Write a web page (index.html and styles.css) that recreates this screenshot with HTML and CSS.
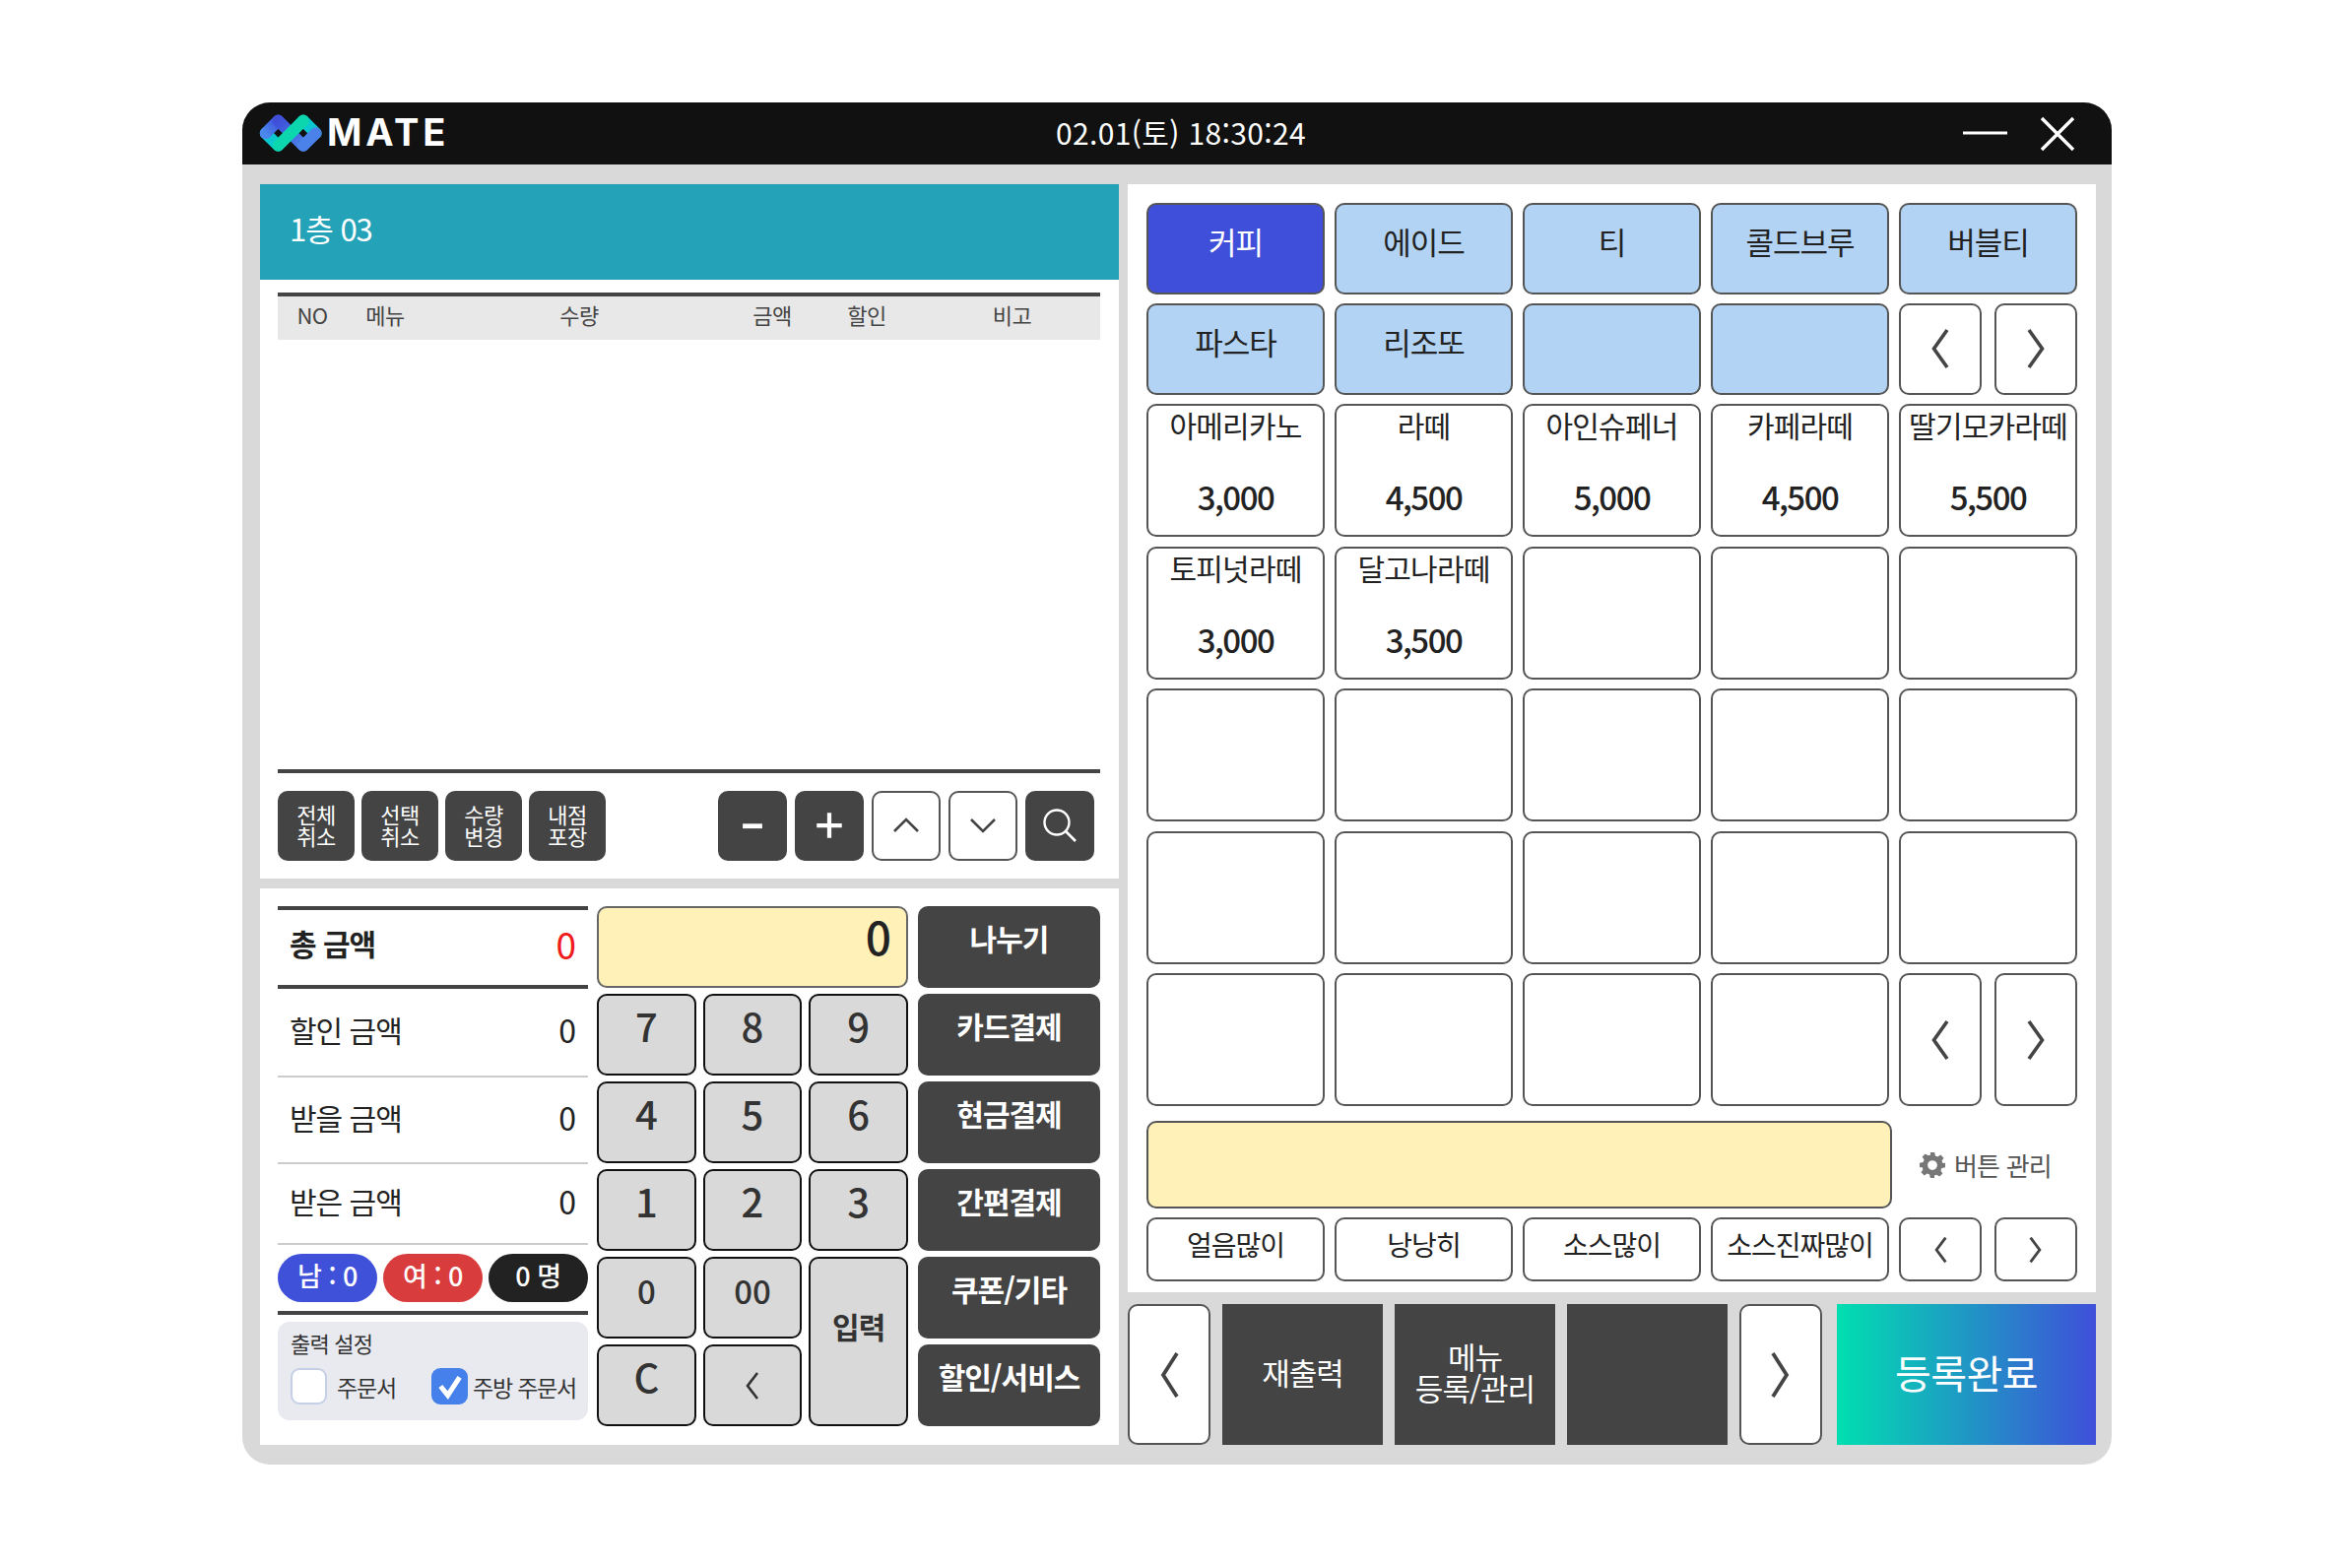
FILE: index.html
```html
<!DOCTYPE html>
<html lang="ko">
<head>
<meta charset="utf-8">
<title>MATE POS</title>
<link rel="stylesheet" href="styles.css">
</head>
<body>
<div class="window">
  <header class="titlebar">
    <div class="brand">
      <svg class="logo" viewBox="70 60 192 118" aria-hidden="true">
        <defs>
          <linearGradient id="lb" x1="0" y1="1" x2="1" y2="0"><stop offset="0" stop-color="#4a86ec"/><stop offset="1" stop-color="#3f4fd9"/></linearGradient>
          <linearGradient id="lm" x1="0" y1="0" x2="1" y2="1"><stop offset="0" stop-color="#3f4fd9"/><stop offset="1" stop-color="#4a82ea"/></linearGradient>
        </defs>
        <g fill="none" stroke-width="36" stroke-linecap="round">
          <path d="M89.5 118 128 156.5" stroke="#0bc8d0"/>
          <path d="M89.5 118 128 79.5" stroke="url(#lb)"/>
          <path d="M128 79.5 205 156.5" stroke="url(#lm)"/>
          <path d="M205 79.5 243.5 118" stroke="#0bc8d0"/>
          <path d="M205 156.5 243.5 118" stroke="#4a82ea"/>
          <path d="M128 156.5 205 79.5" stroke="#0bd6ae"/>
        </g>
        <rect x="121" y="111" width="14" height="14" fill="#111" transform="rotate(45 128 118)"/>
        <rect x="198" y="111" width="14" height="14" fill="#111" transform="rotate(45 205 118)"/>
      </svg>
      <span class="brand-name">MATE</span>
    </div>
    <div class="clock">02.01(토) 18:30:24</div>
    <div class="win-controls">
      <svg class="ic-min" viewBox="0 0 45 4"><rect width="45" height="3" y="0.5" fill="#fff"/></svg>
      <svg class="ic-close" viewBox="0 0 36 36"><path d="M2 2 34 34M34 2 2 34" stroke="#fff" stroke-width="3.4" fill="none"/></svg>
    </div>
  </header>

  <main class="workspace">
    <section class="left-col">
      <div class="order-panel">
        <div class="table-title">1층 03</div>
        <div class="order-body">
          <div class="order-head">
            <span>NO</span><span>메뉴</span><span>수량</span><span>금액</span><span>할인</span><span>비고</span>
          </div>
          <div class="order-list"></div>
          <div class="order-tools">
            <div class="tool-group tight">
              <button class="tool dark">전체<br>취소</button>
              <button class="tool dark">선택<br>취소</button>
              <button class="tool dark">수량<br>변경</button>
              <button class="tool dark">내점<br>포장</button>
            </div>
            <div class="tool-group">
              <button class="tool-sq dark"><svg viewBox="0 0 24 24" class="ic-sign"><path d="M5 12.500h14" stroke="#fff" stroke-width="3.4"/></svg></button>
              <button class="tool-sq dark"><svg viewBox="0 0 24 24" class="ic-sign"><path d="M3 12h18M12 3v18" stroke="#fff" stroke-width="3"/></svg></button>
              <button class="tool-sq light"><svg viewBox="0 0 30 18" class="ic-updown"><path d="M3 15 15 3 27 15" fill="none" stroke="#444" stroke-width="2.6"/></svg></button>
              <button class="tool-sq light"><svg viewBox="0 0 30 18" class="ic-updown"><path d="M3 3 15 15 27 3" fill="none" stroke="#444" stroke-width="2.6"/></svg></button>
              <button class="tool-sq dark"><svg viewBox="0 0 36 36" class="ic-search"><circle cx="15" cy="15" r="12.500" fill="none" stroke="#fff" stroke-width="2.4"/><path d="M24 24 34 34" stroke="#fff" stroke-width="2.6"/></svg></button>
            </div>
          </div>
        </div>
      </div>

      <div class="pay-panel">
        <div class="summary">
          <div class="sum-row total"><span>총 금액</span><span class="red">0</span></div>
          <div class="sum-row discount"><span>할인 금액</span><span class="num">0</span></div>
          <div class="sum-row due"><span>받을 금액</span><span class="num">0</span></div>
          <div class="sum-row paid"><span>받은 금액</span><span class="num">0</span></div>
          <div class="pills">
            <span class="pill blue">남 : 0</span>
            <span class="pill redp">여 : 0</span>
            <span class="pill black">0 명</span>
          </div>
          <div class="print-box">
            <div class="print-title">출력 설정</div>
            <div class="print-opts">
              <label class="opt first"><span class="check"></span>주문서</label>
              <label class="opt second"><span class="check on"><svg viewBox="0 0 36 36"><path d="M8 18 16 28 29 8" fill="none" stroke="#fff" stroke-width="5.5"/></svg></span>주방 주문서</label>
            </div>
          </div>
        </div>

        <div class="keypad">
          <div class="display">0</div>
          <button class="key">7</button><button class="key">8</button><button class="key">9</button>
          <button class="key">4</button><button class="key">5</button><button class="key">6</button>
          <button class="key">1</button><button class="key">2</button><button class="key">3</button>
          <button class="key small">0</button><button class="key small">00</button><button class="key enter">입력</button>
          <button class="key">C</button>
          <button class="key"><svg viewBox="0 0 16 32" class="ic-back"><path d="M13 3 3 16 13 29" fill="none" stroke="#333" stroke-width="2.6"/></svg></button>
        </div>

        <div class="actions">
          <button class="act">나누기</button>
          <button class="act">카드결제</button>
          <button class="act">현금결제</button>
          <button class="act">간편결제</button>
          <button class="act">쿠폰/기타</button>
          <button class="act">할인/서비스</button>
        </div>
      </div>
    </section>

    <section class="right-col">
      <div class="menu-panel">
        <div class="menu-grid">
          <button class="cat active">커피</button>
          <button class="cat">에이드</button>
          <button class="cat">티</button>
          <button class="cat">콜드브루</button>
          <button class="cat">버블티</button>
          <button class="cat">파스타</button>
          <button class="cat">리조또</button>
          <button class="cat"></button>
          <button class="cat"></button>
          <div class="pager">
            <button class="arrow"><svg viewBox="0 0 22 44"><path d="M18 3 4.500 22 18 41" fill="none" stroke="#444" stroke-width="3.6"/></svg></button>
            <button class="arrow"><svg viewBox="0 0 22 44"><path d="M4 3 17.500 22 4 41" fill="none" stroke="#444" stroke-width="3.6"/></svg></button>
          </div>

          <button class="item"><span>아메리카노</span><b>3,000</b></button>
          <button class="item"><span>라떼</span><b>4,500</b></button>
          <button class="item"><span>아인슈페너</span><b>5,000</b></button>
          <button class="item"><span>카페라떼</span><b>4,500</b></button>
          <button class="item"><span>딸기모카라떼</span><b>5,500</b></button>
          <button class="item"><span>토피넛라떼</span><b>3,000</b></button>
          <button class="item"><span>달고나라떼</span><b>3,500</b></button>
          <button class="item"></button><button class="item"></button><button class="item"></button>
          <button class="item"></button><button class="item"></button><button class="item"></button><button class="item"></button><button class="item"></button>
          <button class="item"></button><button class="item"></button><button class="item"></button><button class="item"></button><button class="item"></button>
          <button class="item"></button><button class="item"></button><button class="item"></button><button class="item"></button>
          <div class="pager">
            <button class="arrow"><svg viewBox="0 0 22 44"><path d="M18 3 4.500 22 18 41" fill="none" stroke="#444" stroke-width="3.6"/></svg></button>
            <button class="arrow"><svg viewBox="0 0 22 44"><path d="M4 3 17.500 22 4 41" fill="none" stroke="#444" stroke-width="3.6"/></svg></button>
          </div>
        </div>

        <div class="memo-row">
          <div class="memo"></div>
          <div class="manage">
            <svg viewBox="0 0 24 24" class="ic-gear"><path fill="#777" fill-rule="evenodd" d="M10 0h4l.7 3.200 2.200.9 2.800-1.800 2.900 2.900-1.800 2.800.9 2.200L24 10v4l-3.300.8-.9 2.200 1.800 2.800-2.900 2.900-2.800-1.800-2.200.9L14 24h-4l-.7-3.200-2.200-.9-2.800 1.800-2.900-2.900 1.800-2.800-.9-2.200L0 14v-4l3.300-.8.9-2.200-1.800-2.800 2.900-2.900 2.800 1.800 2.200-.9zM12 7.500a4.500 4.500 0 1 0 0 9 4.500 4.500 0 0 0 0-9z"/></svg>
            <span>버튼 관리</span>
          </div>
        </div>

        <div class="opt-grid">
          <button class="memo-btn">얼음많이</button>
          <button class="memo-btn">낭낭히</button>
          <button class="memo-btn">소스많이</button>
          <button class="memo-btn">소스진짜많이</button>
          <div class="pager">
            <button class="arrow"><svg viewBox="0 0 22 44" class="small-arrow"><path d="M18 6 6 22 18 38" fill="none" stroke="#444" stroke-width="3.6"/></svg></button>
            <button class="arrow"><svg viewBox="0 0 22 44" class="small-arrow"><path d="M4 6 16 22 4 38" fill="none" stroke="#444" stroke-width="3.6"/></svg></button>
          </div>
        </div>
      </div>

      <div class="bottom-bar">
        <button class="nav"><svg viewBox="0 0 24 54"><path d="M20 5 6 27 20 49" fill="none" stroke="#444" stroke-width="3.8"/></svg></button>
        <button class="func">재출력</button>
        <button class="func">메뉴<br>등록/관리</button>
        <button class="func"></button>
        <button class="nav"><svg viewBox="0 0 24 54"><path d="M4 5 18 27 4 49" fill="none" stroke="#444" stroke-width="3.8"/></svg></button>
        <button class="done">등록완료</button>
      </div>
    </section>
  </main>
</div>
</body>
</html>
```

FILE: styles.css
```css
* { box-sizing: border-box; }
html, body { margin: 0; padding: 0; background: #fff; }
body {
  width: 2388px;
  height: 1592px;
  padding: 104px 0 0 246px;
  font-family: "Noto Sans CJK KR", "Noto Sans", sans-serif;
  color: #222;
  overflow: hidden;
}
button {
  font-family: inherit;
  color: inherit;
  margin: 0;
  padding: 0;
  cursor: pointer;
}
svg { display: block; }

.window {
  width: 1898px;
  height: 1383px;
  border-radius: 28px;
  overflow: hidden;
  background: #d9d9d9;
  display: flex;
  flex-direction: column;
}
.titlebar {
  height: 63px;
  background: #111;
  color: #fff;
  display: grid;
  grid-template-columns: 809px 254px 1fr;
  align-items: center;
  padding: 0 37px 0 17px;
}
.brand { display: flex; align-items: center; gap: 5px; }
.logo { width: 64px; height: 39px; }
.brand-name {
  font-family: "Inter", sans-serif;
  font-size: 38px;
  font-weight: 700;
  letter-spacing: 3.8px;
  line-height: 1;
  padding-bottom: 4px;
}
.clock { font-size: 30px; letter-spacing: 0.35px; line-height: 1; text-align: center; white-space: nowrap; padding-bottom: 4px; }
.win-controls { display: flex; justify-content: flex-end; align-items: center; gap: 33px; }
.ic-min { width: 45px; height: 4px; margin-bottom: 2px; }
.ic-close { width: 36px; height: 36px; }

.workspace {
  flex: 1;
  display: grid;
  grid-template-columns: 872px 983px;
  gap: 9px;
  padding: 20px 16px 20px 18px;
  min-height: 0;
}
.left-col { display: flex; flex-direction: column; gap: 10px; min-height: 0; }
.right-col { display: flex; flex-direction: column; gap: 12px; min-height: 0; }

/* order panel */
.order-panel { height: 705px; background: #fff; display: flex; flex-direction: column; }
.table-title {
  height: 97px;
  background: #24a2b8;
  color: #fff;
  font-size: 31px;
  letter-spacing: -1px;
  padding: 0 0 8px 30px;
  display: flex;
  align-items: center;
}
.order-body { flex: 1; padding: 13px 19px 18px 18px; display: flex; flex-direction: column; min-height: 0; }
.order-head {
  height: 48px;
  background: #e8e8e8;
  border-top: 4px solid #444;
  display: grid;
  grid-template-columns: 70px 78px 316px 76px 116px 1fr;
  align-items: center;
  justify-items: center;
  font-size: 22px;
  color: #444;
  letter-spacing: -0.5px;
  padding-bottom: 8px;
}
.order-list { flex: 1; border-bottom: 4px solid #444; }
.order-tools { display: flex; justify-content: space-between; margin-top: 18px; height: 71px; padding-right: 6px; }
.tool-group { display: flex; gap: 8px; }
.tool-group.tight { gap: 7px; }
.tool {
  width: 78px;
  border: 0;
  border-radius: 10px;
  font-size: 22px;
  line-height: 22px;
  letter-spacing: -0.6px;
  color: #fff;
  padding-bottom: 3px;
}
.tool-sq { width: 70px; border-radius: 10px; display: flex; align-items: center; justify-content: center; padding-bottom: 2px; }
.dark { background: #444; border: 0; }
.light { background: #fff; border: 2px solid #555; }
.ic-sign { width: 34px; height: 34px; }
.ic-updown { width: 30px; height: 18px; }
.ic-search { width: 36px; height: 36px; }

/* pay panel */
.pay-panel {
  flex: 1;
  background: #fff;
  display: grid;
  grid-template-columns: 315px 316px 1fr;
  column-gap: 9px;
  padding: 18px 19px 0 18px;
  align-items: start;
}
.summary { display: flex; flex-direction: column; }
.sum-row {
  display: flex;
  align-items: center;
  justify-content: space-between;
  border-bottom: 2px solid #ccc;
  padding: 0 13px 7px 12px;
  font-size: 30px;
  letter-spacing: -1px;
}
.sum-row .num { font-size: 32px; }
.sum-row.total {
  height: 84px;
  border-top: 4px solid #444;
  border-bottom: 4px solid #444;
  font-weight: 700;
  padding-bottom: 10px;
}
.sum-row.total .red { color: #f01c1c; font-weight: 400; font-size: 37px; line-height: 1; margin-top: 3px; }
.sum-row.discount { height: 90px; }
.sum-row.due { height: 88px; }
.sum-row.paid { height: 82px; }
.pills {
  display: grid;
  grid-template-columns: 101px 101px 101px;
  justify-content: space-between;
  margin-top: 9px;
  padding-bottom: 9px;
  border-bottom: 4px solid #444;
}
.pill {
  height: 49px;
  border-radius: 25px;
  color: #fff;
  font-size: 27px;
  font-weight: 500;
  display: flex;
  align-items: center;
  justify-content: center;
  letter-spacing: -0.5px;
  padding-bottom: 6px;
}
.pill.blue { background: #3f50d9; }
.pill.redp { background: #d93c3c; }
.pill.black { background: #222; }
.print-box {
  margin-top: 7px;
  height: 100px;
  background: #e8eaf0;
  border-radius: 12px;
  padding: 5px 0 0 13px;
}
.print-title { font-size: 22px; line-height: 32px; letter-spacing: -0.8px; color: #333; }
.print-opts { display: flex; margin-top: 10px; }
.opt { display: flex; align-items: center; font-size: 23px; letter-spacing: -1.2px; color: #333; white-space: nowrap; }
.opt.first { width: 143px; gap: 10px; }
.opt.second { gap: 5px; }
.check {
  width: 37px;
  height: 37px;
  border: 2px solid #c5cfe6;
  border-radius: 9px;
  background: #fff;
  flex: none;
}
.check.on { background: #4680ea; border-color: #4680ea; }
.check svg { width: 33px; height: 33px; }

.keypad {
  display: grid;
  grid-template-columns: repeat(3, 1fr);
  grid-auto-rows: 83px;
  column-gap: 7px;
  row-gap: 6px;
}
.display {
  grid-column: 1 / 4;
  background: #fff1b8;
  border: 2px solid #666;
  border-radius: 10px;
  text-align: right;
  font-size: 46px;
  font-weight: 500;
  line-height: 56px;
  padding-right: 15px;
}
.key {
  background: #d9d9d9;
  border: 2px solid #111;
  border-radius: 10px;
  font-size: 40px;
  font-weight: 500;
  color: #333;
  line-height: 1;
  padding-bottom: 19px;
  display: flex;
  align-items: center;
  justify-content: center;
}
.key.small { font-size: 33px; padding-bottom: 15px; }
.key.enter { grid-column: 3; grid-row: 5 / 7; font-size: 30px; font-weight: 700; letter-spacing: -1px; padding-bottom: 32px; }
.ic-back { width: 16px; height: 32px; margin-top: 19px; }
.actions { display: grid; grid-auto-rows: 83px; row-gap: 6px; margin-left: 1px; }
.act {
  background: #444;
  border: 0;
  border-radius: 10px;
  color: #fff;
  font-size: 30px;
  font-weight: 700;
  letter-spacing: -1px;
  padding-bottom: 20px;
  line-height: 1;
}

/* menu panel */
.menu-panel { height: 1125px; background: #fff; padding: 19px 19px 0 19px; }
.menu-grid {
  display: grid;
  grid-template-columns: repeat(5, 181px);
  grid-template-rows: 92.5px 92.5px repeat(5, 135px);
  column-gap: 10px;
  row-gap: 9.5px;
}
.cat {
  background: #b2d3f3;
  border: 2px solid #555;
  border-radius: 10px;
  font-size: 31px;
  letter-spacing: -1px;
  padding-bottom: 16px;
  line-height: 1;
}
.cat.active { background: #3f4fd9; color: #fff; }
.pager { display: flex; justify-content: space-between; }
.arrow {
  width: 84px;
  background: #fff;
  border: 2px solid #555;
  border-radius: 10px;
  display: flex;
  align-items: center;
  justify-content: center;
}
.arrow svg { width: 22px; height: 44px; }
.arrow .small-arrow { width: 18px; height: 34px; }
.item {
  background: #fff;
  border: 2px solid #555;
  border-radius: 10px;
  display: flex;
  flex-direction: column;
  align-items: center;
  justify-content: flex-start;
  padding-top: 1px;
}
.item span { font-size: 30px; line-height: 36px; letter-spacing: -0.8px; white-space: nowrap; }
.item b { font-size: 33px; font-weight: 500; line-height: 40px; margin-top: 35px; letter-spacing: -1.5px; }
.memo-row { display: flex; margin-top: 15px; height: 89px; align-items: stretch; }
.memo { width: 757px; background: #fff1b8; border: 2px solid #555; border-radius: 10px; }
.manage { display: flex; align-items: center; gap: 9px; margin-left: 28px; font-size: 26px; color: #555; letter-spacing: -0.8px; }
.ic-gear { width: 26px; height: 26px; }
.opt-grid {
  display: grid;
  grid-template-columns: repeat(5, 181px);
  column-gap: 10px;
  height: 65px;
  margin-top: 9px;
}
.memo-btn {
  background: #fff;
  border: 2px solid #555;
  border-radius: 10px;
  font-size: 28px;
  letter-spacing: -1px;
  line-height: 1;
  padding-bottom: 11px;
  white-space: nowrap;
}

/* bottom bar */
.bottom-bar {
  height: 143px;
  display: grid;
  grid-template-columns: 84px 163px 163px 163px 84px 1fr;
  column-gap: 12px;
}
.nav {
  background: #fff;
  border: 2px solid #555;
  border-radius: 10px;
  display: flex;
  align-items: center;
  justify-content: center;
}
.nav svg { width: 24px; height: 54px; }
.func {
  background: #444;
  border: 0;
  color: #fff;
  font-size: 31px;
  letter-spacing: -1px;
  line-height: 32px;
  padding-bottom: 6px;
}
.done {
  margin-left: 3px;
  border: 0;
  background: linear-gradient(90deg, #00dfb0 0%, #3f4fd9 100%);
  color: #fff;
  font-size: 40px;
  letter-spacing: -0.5px;
  padding-bottom: 6px;
}
```
